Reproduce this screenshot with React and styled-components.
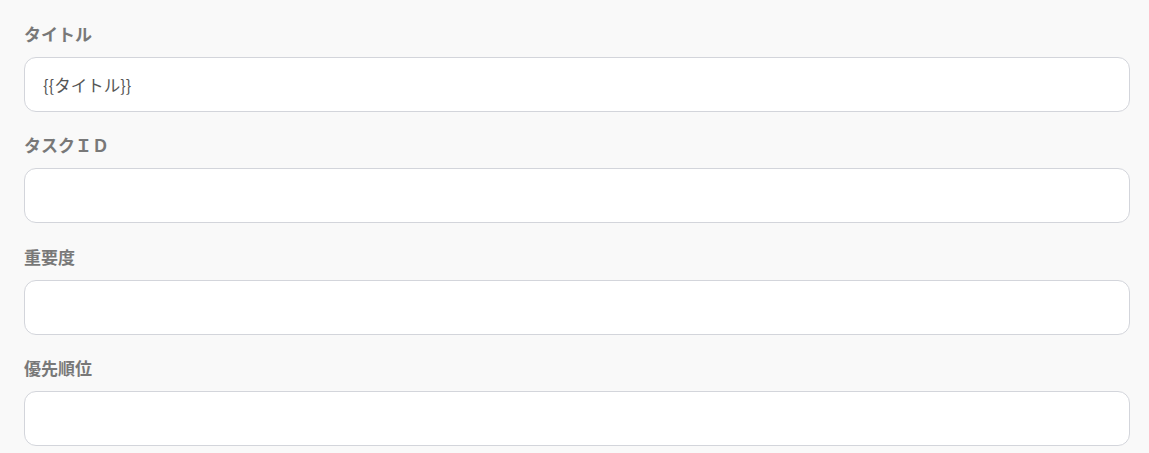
import React from 'react'
import styled, { createGlobalStyle } from 'styled-components'

const GlobalStyle = createGlobalStyle`
    html, body {
        margin: 0;
        padding: 0;
        background: #f9f9f9;
    }
    body {
        font-family: "Noto Sans CJK JP", "Noto Sans", sans-serif;
    }
`

const Form = styled.div`
    display: flex;
    flex-direction: column;
    gap: 20.33px;
    padding: 21px 19px 0 24px;
`

const Field = styled.div`
    display: flex;
    flex-direction: column;
    gap: 11px;
`

const Label = styled.label`
    font-size: 17px;
    line-height: 25px;
    font-weight: 700;
    color: #787878;
`

const Input = styled.input`
    box-sizing: border-box;
    width: 100%;
    height: 55px;
    padding: 0 18px;
    border: 1px solid #d3d5db;
    border-radius: 12px;
    background: #fff;
    font-family: inherit;
    font-size: 16.5px;
    color: #555;
    outline: none;
`

const fields = [
    { label: 'タイトル', value: '{{タイトル}}' },
    { label: 'タスクＩＤ', value: '' },
    { label: '重要度', value: '' },
    { label: '優先順位', value: '' },
]

const App = () => (
    <>
        <GlobalStyle />
        <Form>
            {fields.map(f =>
                <Field key={f.label}>
                    <Label>{f.label}</Label>
                    <Input defaultValue={f.value} />
                </Field>
            )}
        </Form>
    </>
)

export default App
